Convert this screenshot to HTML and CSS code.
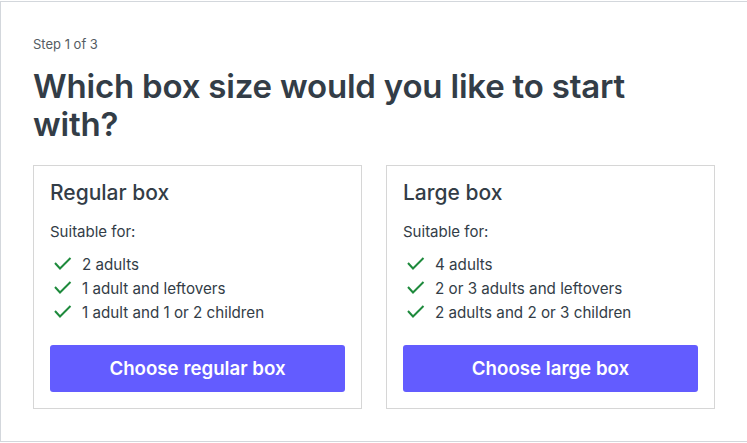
FILE: index.html
```html
<!DOCTYPE html>
<html lang="en">
<head>
    <meta charset="UTF-8">
    <meta name="viewport" content="width=device-width, initial-scale=1.0">
    <title>Choose your box</title>
    <link rel="stylesheet" href="styles.css">
</head>
<body>
    <div class="frame">
        <p class="step">Step 1 of 3</p>
        <h1>Which box size would you like to start with?</h1>

        <div class="boxes">
            <div class="box">
                <h2>Regular box</h2>
                <p class="suitable">Suitable for:</p>
                <ul>
                    <li><svg viewBox="0 0 24 24"><path d="M5 10l5 5.5L20.5 5"/></svg>2 adults</li>
                    <li><svg viewBox="0 0 24 24"><path d="M5 10l5 5.5L20.5 5"/></svg>1 adult and leftovers</li>
                    <li><svg viewBox="0 0 24 24"><path d="M5 10l5 5.5L20.5 5"/></svg>1 adult and 1 or 2 children</li>
                </ul>
                <button>Choose regular box</button>
            </div>

            <div class="box">
                <h2>Large box</h2>
                <p class="suitable">Suitable for:</p>
                <ul>
                    <li><svg viewBox="0 0 24 24"><path d="M5 10l5 5.5L20.5 5"/></svg>4 adults</li>
                    <li><svg viewBox="0 0 24 24"><path d="M5 10l5 5.5L20.5 5"/></svg>2 or 3 adults and leftovers</li>
                    <li><svg viewBox="0 0 24 24"><path d="M5 10l5 5.5L20.5 5"/></svg>2 adults and 2 or 3 children</li>
                </ul>
                <button>Choose large box</button>
            </div>
        </div>
    </div>
</body>
</html>
```

FILE: styles.css
```css
body {
    margin: 0;
    overflow: hidden;
    font-family: Inter, "Noto Sans", sans-serif;
    color: #333d47;
    background: #fff;
}

.frame {
    margin-top: 1px;
    width: 780px;
    padding: 32px;
    border: 1px solid #d3d7dc;
    box-sizing: border-box;
}

.step {
    margin: 0 0 13px;
    font-size: 13px;
    line-height: 20px;
    color: #555c63;
}

h1 {
    margin: 0 0 22px;
    max-width: 640px;
    font-size: 33px;
    line-height: 38px;
    font-weight: 600;
    letter-spacing: -0.2px;
}

.boxes {
    display: grid;
    grid-template-columns: 329px 329px;
    gap: 24px;
}

.box {
    border: 1px solid #d6d6d6;
    padding: 16px;
}

h2 {
    margin: 0 0 16px;
    font-size: 21px;
    line-height: 22px;
    font-weight: 500;
}

.suitable {
    margin: 0 0 9px;
    font-size: 15px;
    line-height: 24px;
}

ul {
    list-style: none;
    margin: 0 0 20px;
    padding: 0;
}

li {
    display: flex;
    align-items: center;
    gap: 8px;
    font-size: 15.2px;
    line-height: 24px;
}

li svg {
    width: 24px;
    height: 24px;
    fill: none;
    stroke: #1e8a3c;
    stroke-width: 2;
}

button {
    display: block;
    width: 100%;
    height: 47px;
    border: none;
    border-radius: 3px;
    background: #635cff;
    color: #fff;
    font-family: inherit;
    font-size: 18.7px;
    font-weight: 600;
}
```
